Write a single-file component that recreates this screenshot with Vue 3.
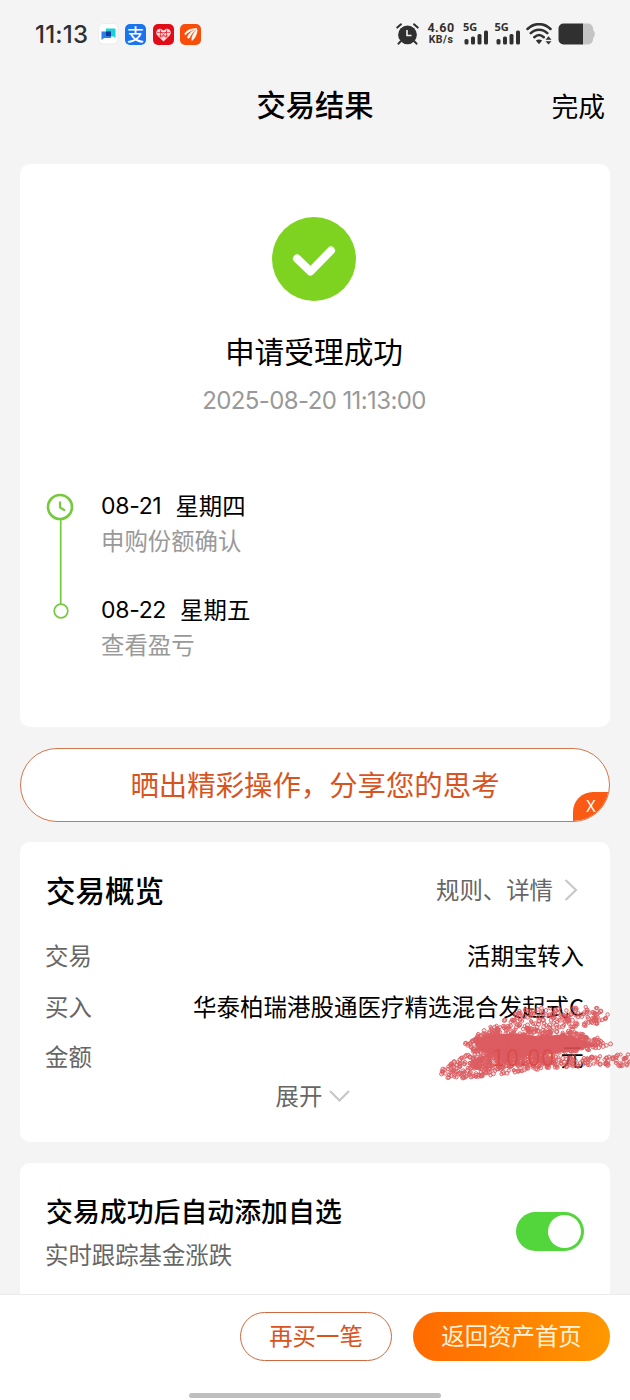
<script setup>
import { ref } from 'vue'

const steps = [
  { date: '08-21', day: '星期四', text: '申购份额确认' },
  { date: '08-22', day: '星期五', text: '查看盈亏' }
]

const autoAdd = ref(true)

// brush areas, in the coordinates of the scribble svg (192 x 80)
const areas = [
  { n: 480, pts: [[26, 40], [42, 28], [65, 16], [79, 7], [109, 3], [139, 2], [164, 4], [171, 12], [162, 20], [142, 23], [135, 27], [159, 33], [173, 40], [168, 45], [149, 47], [60, 54], [30, 46]] },
  { n: 400, pts: [[2, 69], [6, 61], [29, 51], [80, 50], [118, 52], [150, 52], [172, 51], [193, 50], [193, 62], [152, 62], [112, 64], [72, 69], [35, 74], [9, 74]] },
  // denser strokes around the core
  { n: 300, pts: [[30, 40], [48, 27], [75, 22], [120, 27], [140, 28], [165, 40], [140, 48], [60, 54], [38, 50]] },
  { n: 170, pts: [[30, 56], [60, 49], [120, 50], [122, 60], [60, 64], [34, 66]] }
]

let seed = 7
const rand = () => {
  seed = (seed * 16807) % 2147483647
  return seed / 2147483647
}

const inside = (x, y, pts) => {
  let hit = false
  for (let i = 0, j = pts.length - 1; i < pts.length; j = i++) {
    const [xi, yi] = pts[i]
    const [xj, yj] = pts[j]
    if (yi > y !== yj > y && x < ((xj - xi) * (y - yi)) / (yj - yi) + xi) hit = !hit
  }
  return hit
}

const rings = []
areas.forEach(({ n, pts }) => {
  let left = n
  while (left > 0) {
    const x = rand() * 194
    const y = rand() * 80
    if (!inside(x, y, pts)) continue
    rings.push({ x: x.toFixed(1), y: y.toFixed(1), r: (1.5 + rand() * 0.6).toFixed(1) })
    left--
  }
})
</script>

<template>
  <div class="page">
    <div class="content">
      <div class="status">
        <span class="time">11:13</span>
        <div class="apps">
          <svg width="21" height="22" viewBox="0 0 21 22">
            <rect x="0.5" y="0.5" width="19.500" height="20.500" rx="5" fill="#fff" stroke="#ececec" />
            <path d="M8 5.500h8.500a1 1 0 0 1 1 1v8.500l-2-1.500H8z" fill="#18d2d8" />
            <path d="M3.500 8.500h9.500v6.500H6l-2.500 2z" fill="#2d7fe8" />
            <rect x="8" y="8.500" width="5" height="4.500" fill="#0b3c9c" />
          </svg>
          <span class="app alipay">支</span>
          <svg width="21" height="21" viewBox="0 0 21 21">
            <rect width="21" height="21" rx="5" fill="#e00c18" />
            <path d="M10.500 17.500 4.200 11.300C1.500 8 5 3.500 8.500 5.200L10.500 6.500 12.500 5.200C16 3.500 19.500 8 16.800 11.300Z" fill="#fbdcdc" />
            <path d="M4 8.500h13M6 12h9M7.500 5.500v7.500M13.500 5.500v7.500M7 7l6.500 7M14 7l-6.500 7" stroke="#e00c18" stroke-width="0.600" />
          </svg>
          <svg width="21" height="21" viewBox="0 0 21 21">
            <rect width="21" height="21" rx="5" fill="#f94d0a" />
            <path d="M4.500 10C7 6 11 4.800 17 4.500 12 5.800 8 7.800 5.500 10.800zM7.500 13.500c1-3.800 4.500-6.500 9.300-8.500-3.800 3-6 5.500-7.800 9.300zM12 16.500c-.5-4 1.700-7.800 5.200-10.500C16.500 10.300 15.300 14 12 16.500z" fill="#fff" stroke="#fff" stroke-width="0.700" stroke-linejoin="round" />
          </svg>
        </div>
        <div class="signals">
          <svg class="alarm" width="23" height="22" viewBox="0 0 23 22" fill="none" stroke="#303030" stroke-linecap="round">
            <circle cx="11.500" cy="11.800" r="9.400" fill="#303030" stroke="none" />
            <path d="M1.300 4.600 5 1.300M21.700 4.600 18 1.300M4.500 18.500l-2 2.200M18.500 18.500l2 2.200" stroke-width="2" />
            <path d="M11 7v5.500h4.500" stroke="#f4f4f4" stroke-width="1.600" stroke-linecap="butt" />
          </svg>
          <div class="speed"><span>4.60</span><span class="unit">KB/s</span></div>
          <div v-for="n in 2" :key="n" class="cell">
            <span class="net">5G</span>
            <svg width="26" height="22" viewBox="0 0 26 22" fill="#303030">
              <rect x="1.500" y="16" width="4" height="5.500" rx="1.500" />
              <rect x="8" y="13.500" width="4" height="8" rx="1.500" />
              <rect x="14.500" y="11" width="4" height="10.500" rx="1.500" />
              <rect x="21" y="7.500" width="4" height="14" rx="1.500" />
            </svg>
          </div>
          <svg class="wifi" width="27" height="22" viewBox="0 0 27 22" fill="none" stroke="#303030" stroke-linecap="round">
            <path d="M1.500 6C8-.5 18-.5 24.500 6M4.800 10.200c4.500-4.600 12-4.600 16.500 0M8.300 14.200c3-2.700 6.500-2.700 9.500 0" stroke-width="2.500" />
            <path d="M9.800 17.500q3.200-2 6.400 0L13 21.300z" fill="#303030" stroke="none" />
            <path d="m19.500 16.800 3-3.500 3 3.500zM19.500 18.200l3 3.300 3-3.300z" fill="#303030" stroke="none" />
          </svg>
          <svg width="37" height="22" viewBox="0 0 37 22">
            <path d="M24 .5h6a5 5 0 0 1 5 5l.3 2c2 .5 2 6.500 0 7l-.3 2a5 5 0 0 1-5 5h-6z" fill="#c4c4c4" />
            <path d="M5.500.5H25v21H5.500a5 5 0 0 1-5-5v-11a5 5 0 0 1 5-5z" fill="#303030" />
          </svg>
        </div>
      </div>

      <header class="nav">
        <h1>交易结果</h1>
        <a class="done">完成</a>
      </header>

      <section class="card result">
        <svg class="check" width="84" height="84" viewBox="0 0 84 84">
          <circle cx="42" cy="42" r="42" fill="#7ed321" />
          <path d="M25 41.500 38.500 54.500 59 33.500" fill="none" stroke="#fff" stroke-width="8" stroke-linecap="round" stroke-linejoin="round" />
        </svg>
        <h2>申请受理成功</h2>
        <p class="stamp">2025-08-20 11:13:00</p>
        <div class="timeline">
          <svg class="track" width="28" height="128" viewBox="0 0 28 128" fill="none" stroke="#74c93c">
            <circle cx="14" cy="14" r="12" stroke-width="2.600" />
            <path d="M14 8.500V14.500L19 17.500" stroke-width="2.200" />
            <path d="M14.700 26.500v84.500" stroke-width="1.700" />
            <circle cx="15" cy="118" r="6.800" stroke-width="1.700" />
          </svg>
          <ul class="steps">
            <li v-for="s in steps" :key="s.date">
              <p class="when"><span class="date">{{ s.date }}</span><span>{{ s.day }}</span></p>
              <p class="what">{{ s.text }}</p>
            </li>
          </ul>
        </div>
      </section>

      <div class="share">
        <span>晒出精彩操作，分享您的思考</span>
        <i class="close">X</i>
      </div>

      <section class="card overview">
        <div class="head">
          <h3>交易概览</h3>
          <a class="rules">
            规则、详情
            <svg width="14" height="23" viewBox="0 0 14 23" fill="none" stroke="#c8c8c8" stroke-width="2.200">
              <path d="M1.500 2 12 12 1.500 22" />
            </svg>
          </a>
        </div>
        <div class="row"><label>交易</label><span>活期宝转入</span></div>
        <div class="row fund"><label>买入</label><span>华泰柏瑞港股通医疗精选混合发起式C</span></div>
        <div class="row"><label>金额</label><span><b>10.00</b> 元</span></div>
        <div class="more">
          展开
          <svg width="21" height="15" viewBox="0 0 21 15" fill="none" stroke="#c8c8c8" stroke-width="2.200">
            <path d="M1 4 10.500 13.500 20 4" />
          </svg>
        </div>
        <svg class="scribble" width="192" height="80" viewBox="0 0 192 80">
          <path d="M38 39 48 32 80 31 100 34 125 32 140 36 155 41 140 44 115 48 85 51 55 50 42 45Z" class="core" />
          <circle v-for="(c, i) in rings" :key="i" :cx="c.x" :cy="c.y" :r="c.r" />
        </svg>
      </section>

      <section class="card auto">
        <div>
          <h4>交易成功后自动添加自选</h4>
          <p>实时跟踪基金涨跌</p>
        </div>
        <div class="switch" :class="{ on: autoAdd }" @click="autoAdd = !autoAdd"><i></i></div>
      </section>
    </div>

    <footer class="bar">
      <div class="buttons">
        <button class="again">再买一笔</button>
        <button class="home">返回资产首页</button>
      </div>
      <div class="handle"></div>
    </footer>
  </div>
</template>

<style>
body {
  background: #f4f4f4;
}
</style>

<style scoped>
* {
  margin: 0;
  padding: 0;
  box-sizing: border-box;
}

.page {
  display: flex;
  flex-direction: column;
  width: 630px;
  height: 1400px;
  overflow: hidden;
  background: #f4f4f4;
  color: #000;
  font-family: "Noto Sans CJK SC", sans-serif;
  font-size: 23.400px;
}

.content {
  flex: 1;
  min-height: 0;
  overflow: hidden;
}

/* status bar */
.status {
  display: flex;
  align-items: center;
  height: 68px;
  padding: 0 35px;
  color: #303030;
}

.time {
  width: 62.500px;
  padding-top: 1px;
  font: 500 24px/30px Inter, sans-serif;
  letter-spacing: 0.200px;
}

.apps {
  display: flex;
  align-items: center;
  gap: 6.500px;
}

.app {
  width: 21px;
  height: 21px;
  border-radius: 5px;
  background: #1a74ee;
  color: #fff;
  font-size: 17px;
  font-weight: 500;
  line-height: 20px;
  text-align: center;
}

.signals {
  display: flex;
  align-items: center;
  margin-left: auto;
}

.speed {
  display: flex;
  flex-direction: column;
  width: 36px;
  margin: 0 4px;
  text-align: center;
  font: 700 12.500px/12.500px Roboto, sans-serif;
  letter-spacing: 0.500px;
}

.unit {
  font-size: 10.500px;
}

.cell {
  position: relative;
  width: 26px;
  height: 22px;
  margin-right: 5.500px;
}

.cell svg {
  display: block;
}

.net {
  position: absolute;
  left: 0;
  top: -3px;
  font: 700 11px/14px "Noto Sans", sans-serif;
}

.wifi {
  margin-right: 5px;
}

/* title */
.nav {
  display: grid;
  grid-template-columns: 1fr auto 1fr;
  align-items: center;
  height: 96px;
  padding: 0 25px 21px;
}

.nav h1 {
  grid-column: 2;
  padding-bottom: 6px;
  font-size: 29.300px;
  font-weight: 500;
}

.done {
  justify-self: end;
  font-size: 26.800px;
  line-height: 40px;
}

.card {
  margin: 0 20px;
  border-radius: 10px;
  background: #fff;
}

/* result */
.result {
  display: flex;
  flex-direction: column;
  align-items: center;
  height: 563px;
  padding: 53px 2px 0 0;
}

.result h2 {
  margin-top: 28px;
  font-size: 29.700px;
  font-weight: 400;
  line-height: 44px;
}

.stamp {
  margin-top: 10px;
  color: #999;
  font: 400 24px/36px Inter, sans-serif;
  letter-spacing: -0.600px;
}

.timeline {
  display: flex;
  align-self: stretch;
  gap: 27px;
  padding: 74px 26px 0;
}

.steps {
  display: flex;
  flex-direction: column;
  gap: 34px;
  list-style: none;
}

.when {
  display: flex;
  gap: 14px;
  height: 35px;
  line-height: 24px;
}

.date {
  padding-top: 1px;
  font-family: Inter, sans-serif;
  font-size: 23px;
  letter-spacing: -0.300px;
}

.what {
  height: 35px;
  color: #999;
  line-height: 24px;
}

/* share */
.share {
  position: relative;
  display: flex;
  align-items: center;
  justify-content: center;
  height: 74px;
  margin: 21px 20px 20px;
  padding-bottom: 4px;
  overflow: hidden;
  border: 1px solid #d2764c;
  border-radius: 37px;
  background: #fff;
  color: #d8541e;
  font-size: 28.400px;
}

.close {
  position: absolute;
  right: 0;
  bottom: 0;
  width: 36px;
  height: 29px;
  border-top-left-radius: 20px;
  background: #fa5a14;
  color: #fff;
  font: 400 16px/29px "Noto Sans", sans-serif;
  text-align: center;
}

/* overview */
.overview {
  position: relative;
  height: 300px;
  padding: 22px 26px 0;
}

.head {
  display: flex;
  justify-content: space-between;
  align-items: center;
  height: 66px;
  padding-bottom: 16px;
}

.head h3 {
  font-size: 29.500px;
  font-weight: 500;
}

.rules {
  display: flex;
  align-items: center;
  gap: 11px;
  margin-right: 6px;
  color: #666;
}

.row {
  display: flex;
  justify-content: space-between;
  height: 50.500px;
  line-height: 50px;
}

.row label {
  margin-left: -1px;
  color: #666;
}

.fund span {
  font-size: 23.500px;
}

.row b {
  color: #ff3c00;
  font-weight: 400;
  letter-spacing: 1px;
}

.more {
  display: flex;
  align-items: center;
  justify-content: center;
  gap: 7px;
  height: 26px;
  margin-right: 4px;
  color: #666;
}

.scribble {
  position: absolute;
  right: -20px;
  top: 162px;
  fill: rgba(218, 80, 85, 0.150);
  stroke: #da5055;
  stroke-width: 0.900;
  opacity: 0.920;
}

.core {
  fill: #da4e53;
  stroke: #da4e53;
  stroke-width: 3;
  stroke-linejoin: round;
}

/* auto add */
.auto {
  display: flex;
  justify-content: space-between;
  align-items: flex-start;
  height: 180px;
  margin-top: 21px;
  padding: 28px 26px 0;
}

.auto h4 {
  font-size: 26.900px;
  font-weight: 500;
  line-height: 40px;
}

.auto p {
  margin: 5px 0 0 -1px;
  color: #666;
  line-height: 36px;
}

.switch {
  display: flex;
  width: 68px;
  height: 39px;
  margin-top: 21px;
  padding: 3px;
  border-radius: 20px;
  background: #ccc;
}

.switch i {
  width: 33px;
  height: 33px;
  border-radius: 50%;
  background: #fff;
}

.switch.on {
  justify-content: flex-end;
  background: #53d53c;
}

/* bottom bar */
.bar {
  display: flex;
  flex-direction: column;
  align-items: center;
  justify-content: space-between;
  height: 106px;
  padding-top: 17px;
  border-top: 1px solid #ebebeb;
  background: #fff;
}

.buttons {
  display: flex;
  align-self: flex-end;
  gap: 21px;
  padding-right: 20px;
}

.buttons button {
  height: 49px;
  padding-bottom: 3px;
  border-radius: 25px;
  font-family: inherit;
  font-size: 23.400px;
}

.again {
  width: 152px;
  border: 1px solid #cf6840;
  background: #fff;
  color: #d8541e;
}

.home {
  width: 197px;
  border: none;
  background: linear-gradient(90deg, #ff6a00, #ff9800);
  color: #fff3dc;
}

.handle {
  width: 252px;
  height: 5px;
  margin-bottom: 2px;
  border-radius: 3px;
  background: #bfbfbf;
}
</style>
